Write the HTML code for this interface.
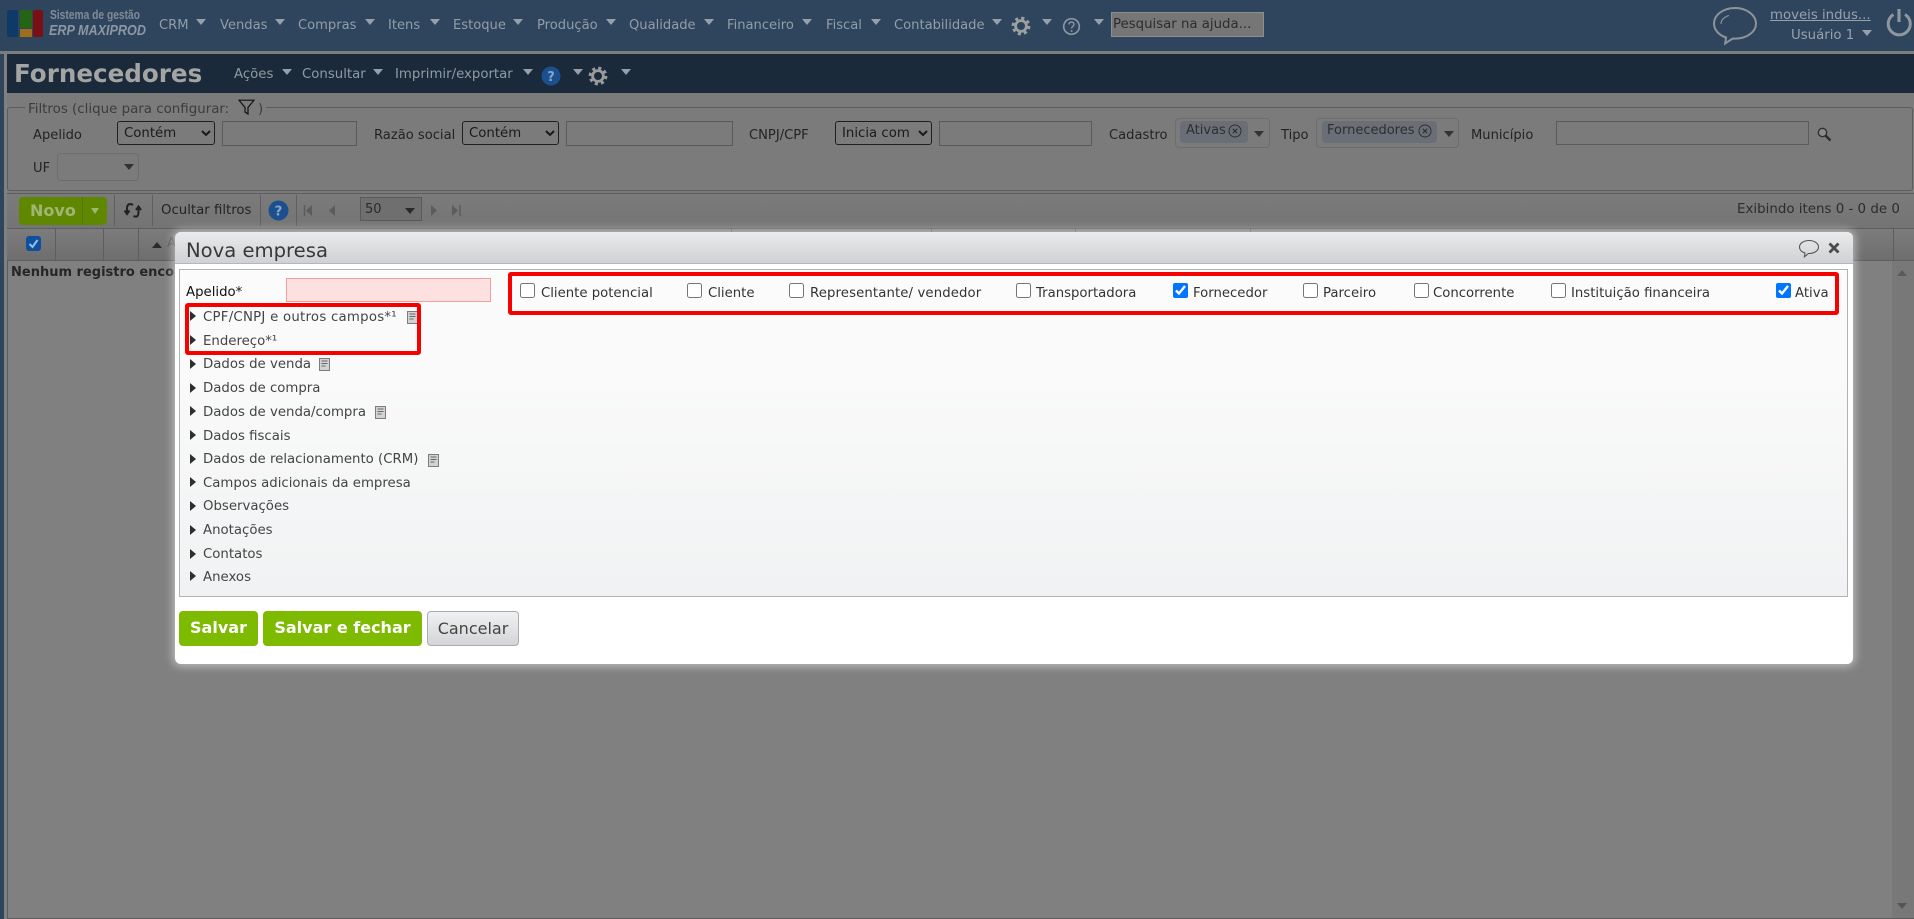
<!DOCTYPE html>
<html lang="pt-BR">
<head>
<meta charset="utf-8">
<title>Fornecedores</title>
<style>
html,body{margin:0;padding:0;width:1914px;height:919px;overflow:hidden;background:#808080}
body{font-family:"DejaVu Sans","Liberation Sans",sans-serif;font-size:13px;color:#2a2a2a}
#root{position:relative;width:1914px;height:919px;overflow:hidden;filter:blur(.35px)}
#root div,#root span.t,#root svg,#root input,#root select{position:absolute}
.b{box-sizing:border-box}
.t{position:absolute;white-space:nowrap;line-height:16px;height:16px}
.m{color:#929da8;font-size:13.1px;top:18px}
.tm{color:#929aa2;font-size:13.3px;top:67px}
.ar{width:0;height:0;border-left:5px solid transparent;border-right:5px solid transparent;border-top:6px solid #96a0aa}
.f{font-size:13.1px;color:#232323;top:128px}
.i{box-sizing:border-box;border:1px solid #5a5a5a;height:25px;background:#7b7b7b;top:121px}
select.s{box-sizing:border-box;top:121px;height:24px;background:transparent;border:1px solid #1f1f1f;border-radius:3px;font:13.3px "DejaVu Sans",sans-serif;color:#1a1a1a;padding:0 0 0 2px;margin:0}
.chip{background:#6a6f77;border-radius:4px;top:121px;height:22px}
.box{box-sizing:border-box;border:1px solid #6d6d6d;border-radius:4px;background:#7b7b7b;top:118px;height:30px}
.sep{width:1px;background:#5f5f5f;top:195px;height:31px}
.hd{width:1px;background:#5e5e5e;top:228px;height:32px}
.tr{font-size:13.3px;color:#444;left:203px}
.ta{width:0;height:0;border-top:5px solid transparent;border-bottom:5px solid transparent;border-left:6px solid #2e2e2e;left:190px}
.cl{font-size:13.25px;color:#333;top:286px}
input.c{margin:0;width:15px;height:15px;top:283px}
.btn{box-sizing:border-box;top:611px;height:35px;border-radius:4px;background:#7dba00;color:#fff;font-weight:bold;font-size:16px;line-height:34px;text-align:center}
.red{box-sizing:border-box;border:4px solid #f60000;border-radius:3px}
</style>
</head>
<body>
<div id="root">
  <!-- top bar -->
  <div style="left:0;top:0;width:1914px;height:51px;background:#2f455d"></div>
  <div style="left:0;top:51px;width:1914px;height:3px;background:#7b7c7c"></div>
  <div style="left:0;top:54px;width:4px;height:865px;background:#2f455d"></div>

  <!-- logo -->
  <div style="left:7px;top:10px;width:11px;height:27px;background:#0f3a68;border-radius:2px"></div>
  <div style="left:20px;top:10px;width:12px;height:18px;background:#246414"></div>
  <div style="left:20px;top:29px;width:12px;height:8px;background:#9c6f1c"></div>
  <div style="left:33px;top:10px;width:10px;height:27px;background:#7a1015;border-radius:2px"></div>
  <span class="t" style="left:50px;top:7px;font:bold 12.5px/16px 'Liberation Sans',sans-serif;color:#7f8b97;transform:scaleX(.82);transform-origin:0 50%">Sistema de gestão</span>
  <span class="t" style="left:49px;top:23px;font:italic bold 14.5px/16px 'Liberation Sans',sans-serif;color:#8c97a3;transform:scaleX(.87);transform-origin:0 50%">ERP MAXIPROD</span>

  <!-- main menu -->
  <span class="t m" style="left:159px">CRM</span><div class="ar" style="left:196px;top:19px"></div>
  <span class="t m" style="left:220px">Vendas</span><div class="ar" style="left:275px;top:19px"></div>
  <span class="t m" style="left:298px">Compras</span><div class="ar" style="left:365px;top:19px"></div>
  <span class="t m" style="left:388px">Itens</span><div class="ar" style="left:430px;top:19px"></div>
  <span class="t m" style="left:453px">Estoque</span><div class="ar" style="left:513px;top:19px"></div>
  <span class="t m" style="left:537px">Produção</span><div class="ar" style="left:606px;top:19px"></div>
  <span class="t m" style="left:629px">Qualidade</span><div class="ar" style="left:704px;top:19px"></div>
  <span class="t m" style="left:727px">Financeiro</span><div class="ar" style="left:802px;top:19px"></div>
  <span class="t m" style="left:826px">Fiscal</span><div class="ar" style="left:871px;top:19px"></div>
  <span class="t m" style="left:894px">Contabilidade</span><div class="ar" style="left:992px;top:19px"></div>
  <svg style="left:1011px;top:16px" width="20" height="20" viewBox="0 0 20 20"><circle cx="10" cy="10" r="7.6" fill="none" stroke="#9a9f9f" stroke-width="3.6" stroke-dasharray="3 2.97"/><circle cx="10" cy="10" r="5.4" fill="none" stroke="#9a9f9f" stroke-width="2.8"/></svg>
  <div class="ar" style="left:1042px;top:19px"></div>
  <svg style="left:1062px;top:17px" width="19" height="19" viewBox="0 0 19 19"><circle cx="9.5" cy="9.5" r="7.8" fill="none" stroke="#8b959f" stroke-width="1.7"/><path d="M7 7.4c0-3.2 5-3.2 5 0 0 1.9-2.4 1.9-2.4 4" fill="none" stroke="#8b959f" stroke-width="1.5"/><circle cx="9.6" cy="14" r="1" fill="#8b959f"/></svg>
  <div class="ar" style="left:1094px;top:19px"></div>
  <div class="b" style="left:1111px;top:12px;width:153px;height:25px;background:#767676;border:1px solid #8a8f93"></div>
  <span class="t" style="left:1113px;top:17px;color:#2d2d2d;font-size:13.3px">Pesquisar na ajuda...</span>

  <svg style="left:1712px;top:6px" width="46" height="40" viewBox="0 0 46 40"><path d="M23 2C11.5 2 2 8.8 2 17.5c0 6.5 5 11.6 12 14l-.8 6 7.5-5c.8.1 1.5.1 2.300.1 11.500 0 21-6.500 21-15.100S34.500 2 23 2z" fill="none" stroke="#8d9499" stroke-width="2"/><path d="M9 18c0-4.500 4-7.500 8-8.500" fill="none" stroke="#8d9499" stroke-width="1.100"/></svg>
  <span class="t" style="left:1770px;top:8px;color:#98a2ac;font-size:13.3px;text-decoration:underline">moveis indus...</span>
  <span class="t" style="left:1791px;top:28px;color:#98a2ac;font-size:13.3px">Usuário 1</span>
  <div class="ar" style="left:1862px;top:30px"></div>
  <svg style="left:1885px;top:7px" width="28" height="30" viewBox="0 0 28 30"><path d="M8.500 7.500a11 11 0 1 0 11.500 0" fill="none" stroke="#8e979f" stroke-width="3"/><path d="M14 2v13" stroke="#8e979f" stroke-width="3.200"/></svg>

  <!-- title bar -->
  <div style="left:7px;top:54px;width:1907px;height:39px;background:#1a2a3b"></div>
  <span class="t" style="left:14px;top:60px;height:28px;line-height:28px;font-size:24.6px;font-weight:bold;color:#a4a4a4">Fornecedores</span>
  <span class="t tm" style="left:234px">Ações</span><div class="ar" style="left:282px;top:69px"></div>
  <span class="t tm" style="left:302px">Consultar</span><div class="ar" style="left:373px;top:69px"></div>
  <span class="t tm" style="left:395px">Imprimir/exportar</span><div class="ar" style="left:523px;top:69px"></div>
  <svg style="left:541px;top:66px" width="20" height="20" viewBox="0 0 20 20"><circle cx="10" cy="10" r="9.500" fill="#1c4f8d"/><text x="10" y="15" font-family="DejaVu Sans,sans-serif" font-size="13" font-weight="bold" fill="#86a5c6" text-anchor="middle">?</text></svg>
  <div class="ar" style="left:573px;top:69px"></div>
  <svg style="left:588px;top:66px" width="20" height="20" viewBox="0 0 20 20"><circle cx="10" cy="10" r="7.600" fill="none" stroke="#9a9a9a" stroke-width="3.600" stroke-dasharray="3 2.970"/><circle cx="10" cy="10" r="5.400" fill="none" stroke="#9a9a9a" stroke-width="2.800"/></svg>
  <div class="ar" style="left:621px;top:69px"></div>

  <!-- filter area -->
  <div style="left:7px;top:93px;width:1907px;height:100px;background:#7b7b7b"></div>
  <div class="b" style="left:7px;top:107px;width:1906px;height:84px;border:1px solid #5c5c5c;border-radius:3px"></div>
  <div style="left:25px;top:100px;width:241px;height:16px;background:#7b7b7b"></div>
  <span class="t" style="left:28px;top:102px;font-size:13.4px;color:#3c3c3c">Filtros (clique para configurar:</span>
  <svg style="left:238px;top:99px" width="17" height="16" viewBox="0 0 17 16"><path d="M1 1.200h15L10 8.500V15L7 13V8.500z" fill="none" stroke="#111" stroke-width="1.200"/></svg>
  <span class="t" style="left:258px;top:102px;font-size:13.3px;color:#3c3c3c">)</span>

  <span class="t f" style="left:33px">Apelido</span>
  <select class="s" style="left:117px;width:98px"><option>Contém</option></select>
  <div class="i" style="left:222px;width:135px"></div>
  <span class="t f" style="left:374px">Razão social</span>
  <select class="s" style="left:462px;width:97px"><option>Contém</option></select>
  <div class="i" style="left:566px;width:167px"></div>
  <span class="t f" style="left:749px">CNPJ/CPF</span>
  <select class="s" style="left:835px;width:97px"><option>Inicia com</option></select>
  <div class="i" style="left:939px;width:153px"></div>
  <span class="t f" style="left:1109px">Cadastro</span>
  <div class="box" style="left:1175px;width:95px"></div>
  <div class="chip" style="left:1180px;width:68px"></div>
  <span class="t" style="left:1186px;top:123px;font-size:13px;color:#2e2e2e">Ativas</span>
  <svg style="left:1228px;top:124px" width="14" height="14" viewBox="0 0 14 14"><circle cx="7" cy="7" r="6" fill="none" stroke="#2f2f2f"/><path d="M4.800 4.800l4.400 4.400M9.200 4.800l-4.400 4.400" stroke="#2f2f2f" stroke-width="1.100"/></svg>
  <div class="ar" style="left:1254px;top:131px;border-top-color:#333"></div>
  <span class="t f" style="left:1281px">Tipo</span>
  <div class="box" style="left:1316px;width:143px"></div>
  <div class="chip" style="left:1322px;width:115px"></div>
  <span class="t" style="left:1327px;top:123px;font-size:13px;color:#2e2e2e">Fornecedores</span>
  <svg style="left:1418px;top:124px" width="14" height="14" viewBox="0 0 14 14"><circle cx="7" cy="7" r="6" fill="none" stroke="#2f2f2f"/><path d="M4.800 4.800l4.400 4.400M9.200 4.800l-4.400 4.400" stroke="#2f2f2f" stroke-width="1.100"/></svg>
  <div class="ar" style="left:1444px;top:131px;border-top-color:#333"></div>
  <span class="t f" style="left:1471px">Município</span>
  <div class="i" style="left:1556px;width:253px;height:24px"></div>
  <svg style="left:1817px;top:127px" width="15" height="15" viewBox="0 0 15 15"><circle cx="5.500" cy="5.500" r="4.200" fill="#8a8a8a" stroke="#2d2d2d" stroke-width="1.300"/><path d="M8.500 8.500l5 5" stroke="#2d2d2d" stroke-width="2.400"/></svg>

  <span class="t f" style="left:33px;top:161px">UF</span>
  <div class="b" style="left:57px;top:153px;width:82px;height:28px;border:1px solid #6d6d6d;border-radius:4px;background:#7b7b7b"></div>
  <div class="ar" style="left:124px;top:164px;border-top-color:#333"></div>

  <!-- toolbar -->
  <div style="left:7px;top:193px;width:1907px;height:35px;background:linear-gradient(#7b7b7b,#747474);border-top:1px solid #5c5c5c;box-sizing:border-box"></div>
  <div style="left:19px;top:197px;width:88px;height:28px;background:#5f8800;border-radius:4px"></div>
  <div style="left:82px;top:197px;width:1px;height:28px;background:#527603"></div>
  <span class="t" style="left:30px;top:202px;height:18px;line-height:18px;font-size:16px;font-weight:bold;color:#a1b574">Novo</span>
  <div style="left:91px;top:208px;width:0;height:0;border-left:4px solid transparent;border-right:4px solid transparent;border-top:6px solid #a1b574"></div>
  <div class="sep" style="left:114px"></div>
  <svg style="left:124px;top:202px" width="19" height="17" viewBox="0 0 19 17"><path d="M9 3C6 1 3 2 3 6.500V11M.5 8.500 3 12l2.500-3.500" fill="none" stroke="#222" stroke-width="2"/><path d="M9.500 14c3 1.500 5 .5 5-4V5.500M12 8l2.500-3.500L17 8" fill="none" stroke="#222" stroke-width="2"/></svg>
  <div class="sep" style="left:152px"></div>
  <span class="t" style="left:161px;top:203px;font-size:13.3px;color:#232323">Ocultar filtros</span>
  <div class="sep" style="left:260px"></div>
  <svg style="left:268px;top:200px" width="21" height="21" viewBox="0 0 20 20"><circle cx="10" cy="10" r="9.500" fill="#1c4f8d"/><text x="10" y="15" font-family="DejaVu Sans,sans-serif" font-size="13" font-weight="bold" fill="#86a5c6" text-anchor="middle">?</text></svg>
  <div class="sep" style="left:296px"></div>
  <svg style="left:303px;top:205px" width="32" height="11" viewBox="0 0 32 11"><path d="M1.500 0v11" stroke="#5c5c5c" stroke-width="1.500"/><path d="M9 0v11L3 5.500zM32 0v11l-6-5.500z" fill="#5c5c5c"/></svg>
  <div class="b" style="left:360px;top:197px;width:62px;height:24px;background:#6f6f6f;border:1px solid #5a5a5a"></div>
  <span class="t" style="left:365px;top:202px;font-size:13px;color:#2a2a2a">50</span>
  <div class="ar" style="left:405px;top:208px;border-top-color:#2a2a2a"></div>
  <svg style="left:430px;top:205px" width="32" height="11" viewBox="0 0 32 11"><path d="M1 0v11l6-5.500zM22 0v11l6-5.500z" fill="#5c5c5c"/><path d="M30 0v11" stroke="#5c5c5c" stroke-width="1.500"/></svg>
  <span class="t" style="left:1737px;top:202px;font-size:13.4px;color:#2c2c2c">Exibindo itens 0 - 0 de 0</span>

  <!-- table header -->
  <div class="b" style="left:7px;top:228px;width:1885px;height:33px;background:linear-gradient(#7c7c7c,#6e6e6e);border-top:1px solid #5e5e5e;border-bottom:1px solid #5e5e5e"></div>
  <div class="b" style="left:1892px;top:228px;width:22px;height:33px;background:linear-gradient(#7c7c7c,#6e6e6e);border-top:1px solid #5e5e5e;border-bottom:1px solid #5e5e5e"></div>
  <div class="hd" style="left:55px"></div><div class="hd" style="left:103px"></div><div class="hd" style="left:138px"></div>
  <div class="hd" style="left:731px"></div><div class="hd" style="left:931px"></div><div class="hd" style="left:1075px"></div><div class="hd" style="left:1250px"></div><div class="hd" style="left:1893px"></div>
  <div style="left:26px;top:236px;width:15px;height:15px;background:#0e4f9e;border-radius:3px"></div>
  <svg style="left:26px;top:236px" width="15" height="15" viewBox="0 0 15 15"><path d="M3.500 8l3 3 5-7" fill="none" stroke="#9bbbe0" stroke-width="2"/></svg>
  <div style="left:152px;top:242px;width:0;height:0;border-left:5px solid transparent;border-right:5px solid transparent;border-bottom:6px solid #2a2a2a"></div>
  <span class="t" style="left:167px;top:236px;font-size:13px;color:#555">A</span>

  <!-- grid body -->
  <div style="left:7px;top:261px;width:1px;height:658px;background:#5c5c5c"></div>
  <div style="left:7px;top:918px;width:1907px;height:1px;background:#5c5c5c"></div>
  <div style="left:1892px;top:261px;width:22px;height:657px;background:#787878"></div>
  <div style="left:1897px;top:270px;width:0;height:0;border-left:5px solid transparent;border-right:5px solid transparent;border-bottom:6px solid #5a5a5a"></div>
  <div style="left:1897px;top:903px;width:0;height:0;border-left:5px solid transparent;border-right:5px solid transparent;border-top:6px solid #555"></div>
  <span class="t" style="left:11px;top:265px;font-size:13px;font-weight:bold;color:#262626">Nenhum registro encontrado</span>

  <!-- modal -->
  <div style="left:175px;top:232px;width:1678px;height:432px;background:#fff;border-radius:6px;box-shadow:0 0 9px 2px rgba(255,255,255,.5)"></div>
  <div style="left:175px;top:232px;width:1678px;height:32px;background:linear-gradient(#e9ebec,#cfd1d4);border-radius:6px 6px 0 0;border-bottom:1px solid #b5b7ba;box-sizing:border-box"></div>
  <span class="t" style="left:186px;top:239px;height:24px;line-height:24px;font-size:19.6px;color:#383838">Nova empresa</span>
  <svg style="left:1798px;top:239px" width="22" height="19" viewBox="0 0 22 19"><path d="M11 1.500C5.800 1.500 1.500 4.300 1.500 8c0 2.800 2.300 5 5.500 6l-.6 3.800 4.100-3.300c5.400.2 10-2.700 10-6.500S16.200 1.500 11 1.500z" fill="none" stroke="#555" stroke-width="1.100"/></svg>
  <svg style="left:1828px;top:242px" width="12" height="12" viewBox="0 0 12 12"><path d="M1.500 1.500l9 9M10.500 1.500l-9 9" stroke="#4b4b4b" stroke-width="2.800"/></svg>

  <div class="b" style="left:179px;top:269px;width:1669px;height:328px;border:1px solid #b2b2b2;background:linear-gradient(#fbfbfb 0%,#fafafa 30%,#f0f2f3 100%)"></div>

  <span class="t" style="left:186px;top:285px;font-size:13.3px;color:#111">Apelido*</span>
  <div class="b" style="left:286px;top:278px;width:205px;height:24px;background:#fde0e0;border:1px solid #ef9f9f"></div>

  <div class="ta" style="top:311px"></div><span class="t tr" style="top:310px;letter-spacing:.25px">CPF/CNPJ e outros campos*¹</span>
  <div class="ta" style="top:335px"></div><span class="t tr" style="top:334px">Endereço*¹</span>
  <div class="ta" style="top:359px"></div><span class="t tr" style="top:357px">Dados de venda</span>
  <div class="ta" style="top:383px"></div><span class="t tr" style="top:381px">Dados de compra</span>
  <div class="ta" style="top:406px"></div><span class="t tr" style="top:405px">Dados de venda/compra</span>
  <div class="ta" style="top:430px"></div><span class="t tr" style="top:429px">Dados fiscais</span>
  <div class="ta" style="top:454px"></div><span class="t tr" style="top:452px">Dados de relacionamento (CRM)</span>
  <div class="ta" style="top:477px"></div><span class="t tr" style="top:476px">Campos adicionais da empresa</span>
  <div class="ta" style="top:501px"></div><span class="t tr" style="top:499px">Observações</span>
  <div class="ta" style="top:525px"></div><span class="t tr" style="top:523px">Anotações</span>
  <div class="ta" style="top:549px"></div><span class="t tr" style="top:547px">Contatos</span>
  <div class="ta" style="top:571px"></div><span class="t tr" style="top:570px">Anexos</span>

  <svg style="left:407px;top:311px" width="11" height="13" viewBox="0 0 11 13"><rect x=".5" y=".5" width="10" height="12" fill="#d2d2d2" stroke="#7c7c7c"/><path d="M2.500 3h6M2.500 5.500h6M2.500 8h4" stroke="#6b6b6b"/></svg>
  <svg style="left:319px;top:358px" width="11" height="13" viewBox="0 0 11 13"><rect x=".5" y=".5" width="10" height="12" fill="#d2d2d2" stroke="#7c7c7c"/><path d="M2.500 3h6M2.500 5.500h6M2.500 8h4" stroke="#6b6b6b"/></svg>
  <svg style="left:375px;top:406px" width="11" height="13" viewBox="0 0 11 13"><rect x=".5" y=".5" width="10" height="12" fill="#d2d2d2" stroke="#7c7c7c"/><path d="M2.500 3h6M2.500 5.500h6M2.500 8h4" stroke="#6b6b6b"/></svg>
  <svg style="left:428px;top:454px" width="11" height="13" viewBox="0 0 11 13"><rect x=".5" y=".5" width="10" height="12" fill="#d2d2d2" stroke="#7c7c7c"/><path d="M2.500 3h6M2.500 5.500h6M2.500 8h4" stroke="#6b6b6b"/></svg>

  <div class="red" style="left:185px;top:303px;width:236px;height:52px"></div>
  <div class="red" style="left:508px;top:272px;width:1331px;height:43px"></div>

  <input class="c" type="checkbox" style="left:520px"><span class="t cl" style="left:541px">Cliente potencial</span>
  <input class="c" type="checkbox" style="left:687px"><span class="t cl" style="left:708px">Cliente</span>
  <input class="c" type="checkbox" style="left:789px"><span class="t cl" style="left:810px;letter-spacing:.12px">Representante/ vendedor</span>
  <input class="c" type="checkbox" style="left:1016px"><span class="t cl" style="left:1036px">Transportadora</span>
  <input class="c" type="checkbox" checked style="left:1173px"><span class="t cl" style="left:1193px">Fornecedor</span>
  <input class="c" type="checkbox" style="left:1303px"><span class="t cl" style="left:1323px">Parceiro</span>
  <input class="c" type="checkbox" style="left:1414px"><span class="t cl" style="left:1433px">Concorrente</span>
  <input class="c" type="checkbox" style="left:1551px"><span class="t cl" style="left:1571px">Instituição financeira</span>
  <input class="c" type="checkbox" checked style="left:1776px"><span class="t cl" style="left:1795px">Ativa</span>

  <div class="btn" style="left:179px;width:79px">Salvar</div>
  <div class="btn" style="left:263px;width:159px">Salvar e fechar</div>
  <div class="btn" style="left:427px;width:92px;background:linear-gradient(#f0f1f2,#d3d5d8);color:#444;font-weight:normal;border:1px solid #a9abae">Cancelar</div>
</div>
</body>
</html>
